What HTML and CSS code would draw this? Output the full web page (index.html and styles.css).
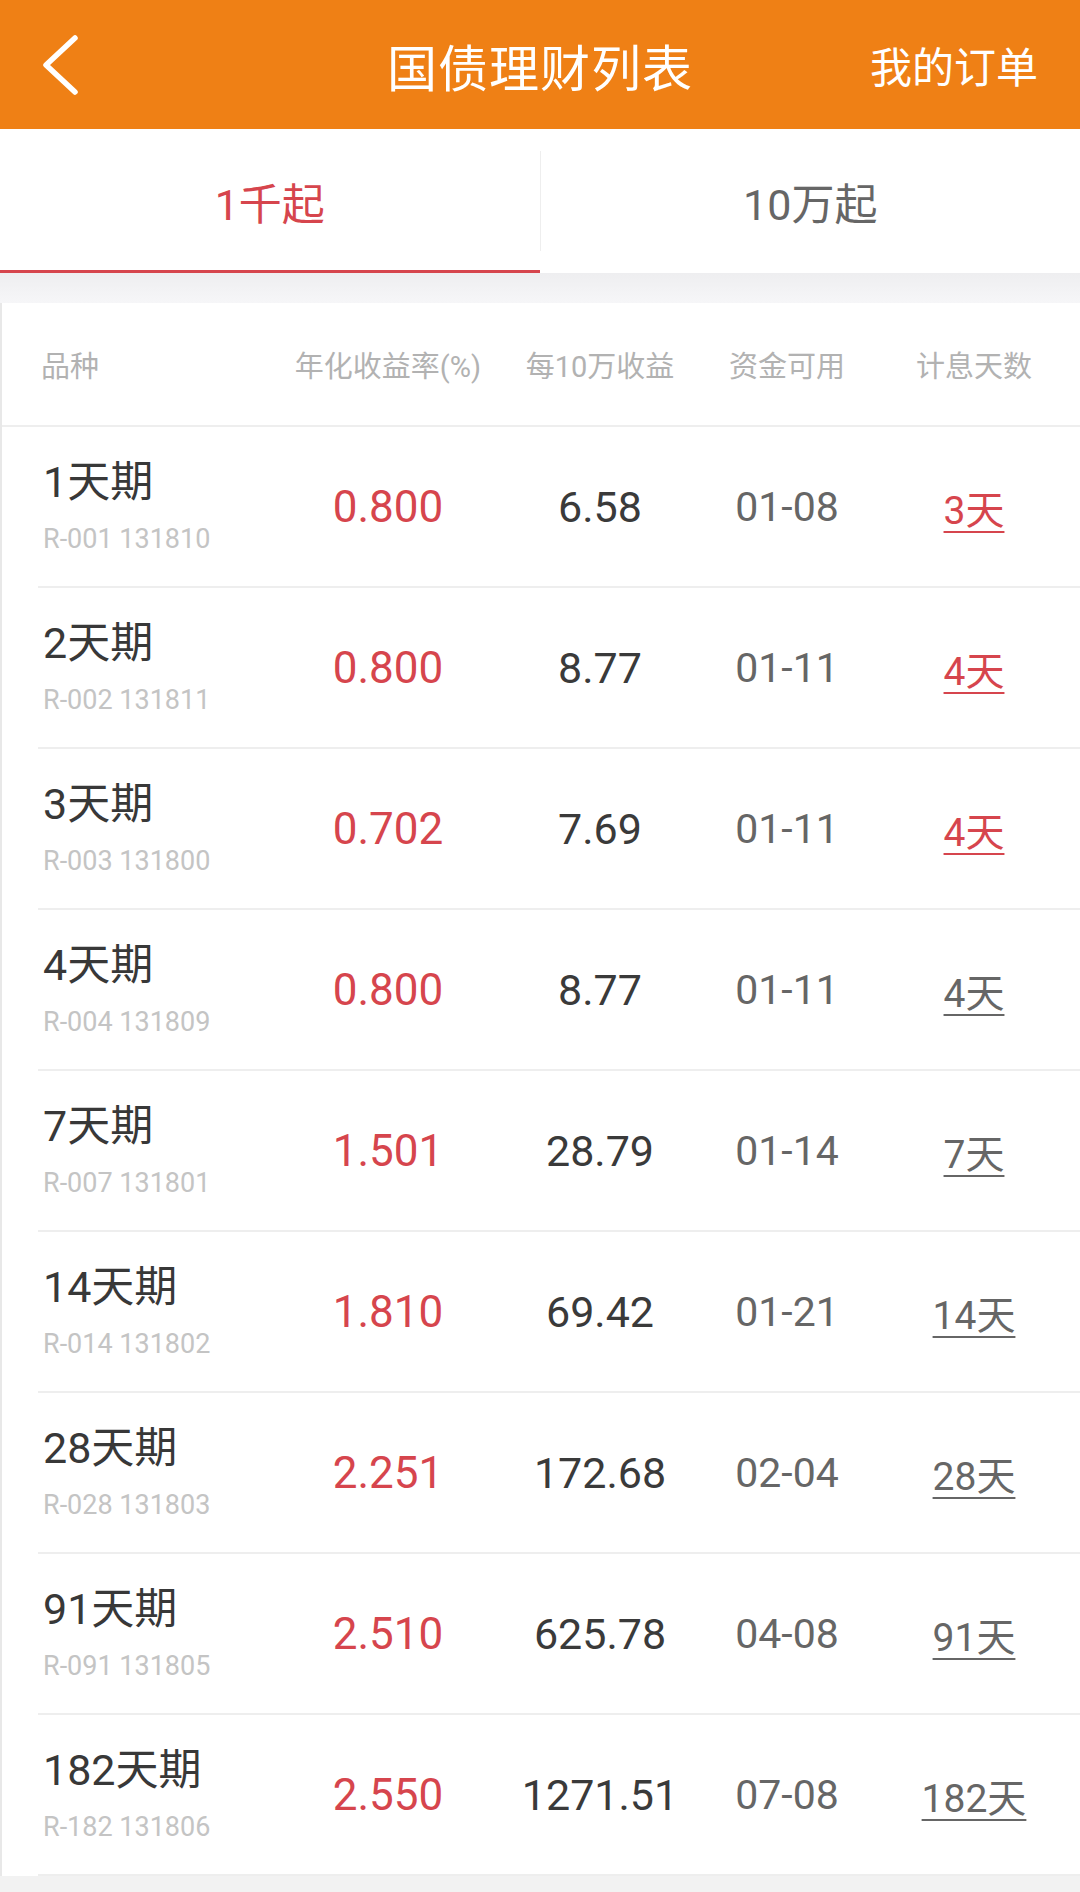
FILE: index.html
```html
<!DOCTYPE html>
<html>
<head>
    <meta charset="utf-8">
    <link rel="stylesheet" href="styles.css">
</head>
<body>
    <div class="topbar">
        <div class="back">
            <svg width="40" height="62" viewBox="0 0 40 62"><polyline points="35,4 6,31 35,58" fill="none" stroke="#ffffff" stroke-width="5.5" stroke-linecap="round" stroke-linejoin="round"/></svg>
        </div>
        <div class="title">国债理财列表</div>
        <div class="orders">我的订单</div>
    </div>
    <div class="tabs">
        <div class="tab active">1千起</div>
        <span class="tab-divider"></span>
        <div class="tab">10万起</div>
    </div>
    <div class="gap"></div>
    <div class="table">
        <div class="head">
            <div class="cell name-cell">品种</div>
            <div class="cell">年化收益率(%)</div>
            <div class="cell">每10万收益</div>
            <div class="cell">资金可用</div>
            <div class="cell">计息天数</div>
        </div>
        <div id="rows"></div>
    </div>
    <script>
        const items = [
            ['1天期', 'R-001 131810', '0.800', '6.58', '01-08', '3天', true],
            ['2天期', 'R-002 131811', '0.800', '8.77', '01-11', '4天', true],
            ['3天期', 'R-003 131800', '0.702', '7.69', '01-11', '4天', true],
            ['4天期', 'R-004 131809', '0.800', '8.77', '01-11', '4天', false],
            ['7天期', 'R-007 131801', '1.501', '28.79', '01-14', '7天', false],
            ['14天期', 'R-014 131802', '1.810', '69.42', '01-21', '14天', false],
            ['28天期', 'R-028 131803', '2.251', '172.68', '02-04', '28天', false],
            ['91天期', 'R-091 131805', '2.510', '625.78', '04-08', '91天', false],
            ['182天期', 'R-182 131806', '2.550', '1271.51', '07-08', '182天', false]
        ];
        const rows = document.getElementById('rows');
        items.forEach(it => {
            const row = document.createElement('div');
            row.className = 'row';
            row.innerHTML =
                '<div class="cell name-cell"><div class="name">' + it[0] + '</div><div class="code">' + it[1] + '</div></div>' +
                '<div class="cell rate">' + it[2] + '</div>' +
                '<div class="cell profit">' + it[3] + '</div>' +
                '<div class="cell date">' + it[4] + '</div>' +
                '<div class="cell"><span class="days' + (it[6] ? ' hot' : '') + '">' + it[5] + '</span></div>';
            rows.appendChild(row);
        });
    </script>
</body>
</html>
```

FILE: styles.css
```css
body { margin: 0; background-color: #f2f2f2; font-family: Roboto, "Noto Sans CJK SC", sans-serif; color: #333333; }
.topbar { height: 129px; background-color: #ef8015; display: grid; grid-template-columns: 1fr auto 1fr; align-items: center; color: #ffffff; }
.back { padding-left: 40px; display: flex; align-items: center; }
.title { font-size: 50px; letter-spacing: 1px; }
.orders { justify-self: end; padding-right: 42px; font-size: 42px; }
.tabs { height: 144px; background-color: #ffffff; display: flex; align-items: center; }
.tab { flex: 1; height: 144px; box-sizing: border-box; display: flex; align-items: center; justify-content: center; font-size: 43px; color: #666666; border-bottom: 3px solid transparent; padding-top: 2px; }
.tab.active { color: #d6454d; border-bottom-color: #d6454d; }
.tab-divider { width: 1px; height: 100px; background-color: #eeeeee; }
.gap { height: 30px; background: linear-gradient(#eeeef0, #f6f6f8); }
.table { background-color: #ffffff; border-left: 2px solid #e8e8e8; }
.head, .row { display: grid; grid-template-columns: 280px 212px 212px 162px 1fr; align-items: center; }
.head { height: 122px; border-bottom: 2px solid #eeeeee; font-size: 29px; color: #b2b2b2; }
.head .cell { text-align: center; white-space: nowrap; }
.head .name-cell { text-align: left; padding-left: 39px; }
.row { height: 159px; margin-left: 36px; border-bottom: 2px solid #eeeeee; grid-template-columns: 244px 212px 212px 162px 1fr; }
.row .cell { text-align: center; }
.row .name-cell { text-align: left; padding-left: 5px; }
.name { font-size: 43px; line-height: 50px; color: #383838; }
.code { font-size: 27px; line-height: 36px; margin-top: 14px; color: #c4c4c4; }
.rate { font-size: 44px; color: #d6454d; }
.profit { font-size: 43px; color: #3a3a3a; }
.date { font-size: 41px; color: #666666; }
.days { font-size: 39px; color: #666666; text-decoration: underline; text-decoration-thickness: 2px; text-underline-offset: 7px; }
.days.hot { color: #d6454d; }
```
